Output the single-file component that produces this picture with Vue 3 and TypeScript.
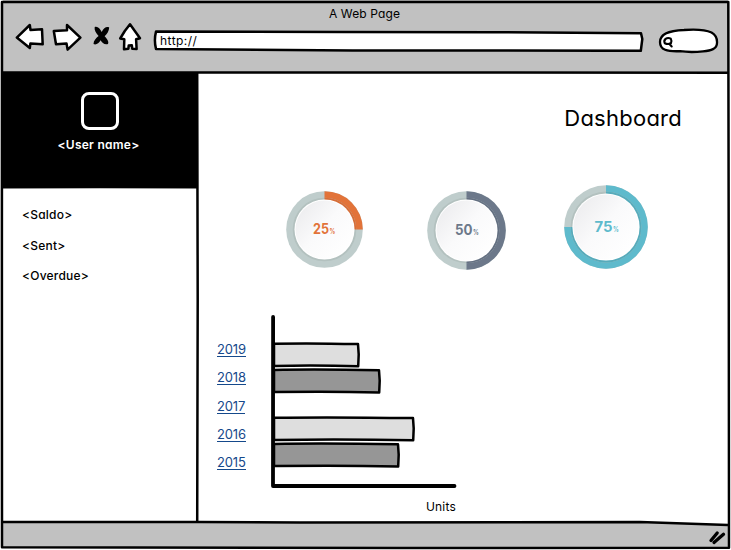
<script setup lang="ts">
interface Gauge {
  value: number
  color: string
  shade: string
  size: number
  hole: number
  textWidth: number
}

interface Bar {
  width: number
  fill: string
  y: number
}

const menu: string[] = ['<Saldo>', '<Sent>', '<Overdue>']
const years: number[] = [2019, 2018, 2017, 2016, 2015]

const gauges: Gauge[] = [
  { value: 25, color: '#e27339', shade: '#d66d37', size: 77, hole: 30, textWidth: 16 },
  { value: 50, color: '#6c788a', shade: '#647082', size: 79, hole: 31, textWidth: 17.5 },
  { value: 75, color: '#5ebacc', shade: '#56abbb', size: 84, hole: 33.6, textWidth: 18 },
]

const bars: Bar[] = [
  { width: 85, fill: '#dedede', y: 28.4 },
  { width: 106, fill: '#969696', y: 54.6 },
  { width: 140, fill: '#dedede', y: 102.4 },
  { width: 125, fill: '#969696', y: 128.6 },
]

function arc(value: number, r: number): string {
  const a = (value / 100) * Math.PI * 2
  const x = Math.sin(a) * r
  const y = -Math.cos(a) * r
  return `M0 0V${-r}A${r} ${r} 0 ${value > 50 ? 1 : 0} 1 ${x} ${y}Z`
}

function barPath(b: Bar): string {
  const r = 3 + b.width
  return `M3 ${b.y + 0.4}Q${3 + b.width * 0.4} ${b.y - 0.5} ${r - 1} ${b.y + 0.7}L${r - 0.3} ${b.y + 11}L${r - 0.8} ${b.y + 22.8}Q${3 + b.width * 0.5} ${b.y + 21.6} 3 ${b.y + 22.5}Z`
}
</script>

<template>
  <div class="window">
    <header class="chrome">
      <div class="caption">A Web Page</div>
      <div class="toolbar">
        <svg class="nav" width="132" height="32" viewBox="12 21 132 32">
          <g fill="#fff" stroke="#000" stroke-width="2.5" stroke-linejoin="round">
            <path d="M16.8 37.6L29.8 25L30.5 30L42 29.2L42.7 44.3L30.4 43.4L29.8 48Z" />
            <path d="M53.8 31L67 30.2L67 25L80.4 37.6L67.6 49.6L66.5 43.4L56 44.3Z" />
            <path d="M130 24.3L124.8 31L120.2 38.5L124.3 39.2L124 49.2L128.4 48.7L128.7 45.5L131.8 45.2L132.3 48.8L136.6 49L136.1 39.3L140 38.2Z" />
          </g>
          <path d="M94.7 27C97.5 25.8 100 28.5 101.7 32C103.8 28 106.4 26.1 109.2 27.5C109 31 107 34.4 104.6 36.3C106.6 38.5 109.3 41.4 108 44C104.7 45.3 102 42.6 100.6 40.2C98.7 43.1 96.3 45.3 93.5 44C93.5 40.6 96.2 38 98.6 36C96 33.2 94 30 94.7 27Z" />
        </svg>
        <div class="address">
          <svg class="outline" width="492" height="22" viewBox="0 0 492 22">
            <path d="M3 1.6L190 2L340 2.2L488 3.2L489.3 9L487.8 20.8L200 20.4L3 19Q.8 10 3 1.6Z" fill="#fff" stroke="#000" stroke-width="2.5" stroke-linejoin="round" />
          </svg>
          <span class="url">http://</span>
        </div>
        <svg class="search" width="62" height="26" viewBox="657 28 62 26">
          <path d="M660 42C660 34 669 30.5 684 30Q703 28.6 711.5 32.5Q717.5 36 717 43C717 49 711 50.5 703 51.3Q691 52.7 680 51.2C667 51.7 660 50 660 42Z" fill="#fff" stroke="#000" stroke-width="2.3" />
          <path d="M665.6 38.9Q668 37.1 670.8 38.7Q672 40.7 670.9 43.3Q668 44.7 664.8 43.2Q663.5 40.8 665.6 38.9ZM669.2 43.8L671.7 46.4" fill="none" stroke="#000" stroke-width="2.1" stroke-linecap="round" />
        </svg>
      </div>
    </header>

    <div class="body">
      <aside class="sidebar">
        <div class="profile">
          <div class="avatar"></div>
          <div class="name">&lt;User name&gt;</div>
        </div>
        <nav class="menu">
          <span v-for="item in menu" :key="item">{{ item }}</span>
        </nav>
      </aside>

      <main class="main">
        <h1 class="title">Dashboard</h1>
        <section class="gauges">
          <svg v-for="g in gauges" :key="g.value" :class="'g' + g.value" :width="g.size" :height="g.size" :viewBox="`${-g.size / 2} ${-g.size / 2} ${g.size} ${g.size}`">
            <defs>
              <linearGradient :id="'face' + g.value" x1="0" y1="0.1" x2="0.9" y2="0.9">
                <stop offset="0" stop-color="#ebebed" />
                <stop offset="0.5" stop-color="#fafafb" />
                <stop offset="1" stop-color="#ffffff" />
              </linearGradient>
            </defs>
            <circle :r="g.size / 2 - 0.2" fill="#bfcdcc" />
            <path :d="arc(g.value, g.size / 2 - 0.2)" :fill="g.color" />
            <circle :r="g.hole + 1.8" fill="#b3c1bf" />
            <path :d="arc(g.value, g.hole + 1.8)" :fill="g.shade" />
            <circle :r="g.hole" fill="#fff" />
            <circle :r="g.hole - 1" :fill="`url(#face${g.value})`" />
            <text x="-11.5" y="4.6" class="value" :fill="g.color" :textLength="g.textWidth" lengthAdjust="spacingAndGlyphs">{{ g.value }}</text>
            <text :x="g.textWidth - 11" y="4.8" class="percent" :fill="g.color" textLength="5.8" lengthAdjust="spacingAndGlyphs">%</text>
          </svg>
        </section>
        <section class="report">
          <div class="years">
            <a v-for="y in years" :key="y">{{ y }}</a>
          </div>
          <div class="plot">
            <svg width="188" height="176" viewBox="0 0 188 176">
              <path v-for="b in bars" :key="b.y" :d="barPath(b)" :fill="b.fill" stroke="#000" stroke-width="2.5" stroke-linejoin="round" />
              <path d="M2.1 2L2 171L183.5 171" fill="none" stroke="#000" stroke-width="3.8" stroke-linecap="round" stroke-linejoin="round" />
            </svg>
            <div class="units">Units</div>
          </div>
        </section>
      </main>
    </div>

    <footer class="status"></footer>

    <svg class="frame" width="731" height="550" viewBox="0 0 731 550">
      <path d="M3 522L300 522.3L640 522L728 525V547H3Z" fill="#c1c1c1" />
      <g fill="none" stroke="#000" stroke-width="2.5" stroke-linejoin="round">
        <path d="M2 2L728.3 2L728.8 300L729 547.8L400 548L2 547.3L1.9 250Z" />
        <path d="M2 72.4L400 72.5L728 72.7" />
        <path d="M2 522L200 522L300 522.4L640 522.1L728 525" />
        <path d="M197.2 73L197.7 300L197.2 522" />
        <path d="M2 187.3L100 187L197 187.3" />
      </g>
      <path d="M711 540.5L717.2 533M714 542.5L723.5 534.3" stroke="#000" stroke-width="3.3" stroke-linecap="round" />
    </svg>
  </div>
</template>

<style>
body {
  background: #fff;
}
</style>

<style scoped>
.window {
  position: relative;
  width: 731px;
  height: 550px;
  display: grid;
  grid-template-rows: 73px 449px 28px;
  overflow: hidden;
  font-family: Inter, "Liberation Sans", sans-serif;
  font-feature-settings: "cv11";
  font-size: 13px;
  color: #000;
  background: #fff;
}
.frame {
  position: absolute;
  inset: 0;
  pointer-events: none;
}
.chrome {
  margin: 0 3px;
  background: #c1c1c1;
}
.caption {
  height: 21px;
  padding: 6px 2px 0 0;
  box-sizing: border-box;
  line-height: 15px;
  text-align: center;
  font-size: 12px;
  letter-spacing: 0.12px;
}
.toolbar {
  display: flex;
  align-items: flex-start;
  padding-left: 9px;
}
.nav {
  flex: none;
}
.address {
  position: relative;
  width: 492px;
  height: 22px;
  margin: 9px 0 0 9px;
}
.outline {
  position: absolute;
  inset: 0;
}
.url {
  position: relative;
  display: block;
  padding-left: 7px;
  font-size: 12px;
  line-height: 21px;
  letter-spacing: 0.45px;
}
.search {
  margin: 7px 0 0 12px;
}
.body {
  display: grid;
  grid-template-columns: 198px 1fr;
}
.sidebar {
  padding-left: 2px;
}
.profile {
  height: 114px;
  box-sizing: border-box;
  padding-top: 19px;
  display: flex;
  flex-direction: column;
  align-items: center;
  background: #000;
  color: #fff;
}
.avatar {
  box-sizing: border-box;
  width: 38px;
  height: 38px;
  margin-right: 1px;
  border: 3px solid #fff;
  border-radius: 8px;
}
.name {
  margin: 7px 3px 0 0;
  line-height: 16px;
  font-size: 12px;
  font-weight: 600;
  letter-spacing: 0.25px;
}
.menu {
  display: flex;
  flex-direction: column;
  gap: 14.5px;
  padding: 20px 0 0 20px;
  font-size: 12px;
  font-weight: 500;
  letter-spacing: 0.22px;
  line-height: 16px;
}
.title {
  margin: 0;
  padding: 31px 49px 0 0;
  text-align: right;
  font-size: 22px;
  font-weight: 400;
  line-height: 28px;
  letter-spacing: 0.25px;
}
.gauges {
  display: flex;
  align-items: flex-start;
  height: 86px;
  padding: 53px 0 0 88px;
}
.g25 {
  margin-top: 6px;
}
.g50 {
  margin: 6px 57.5px 0 64px;
}
.value {
  font-size: 14.5px;
  font-weight: 700;
}
.percent {
  font-size: 7.5px;
  font-weight: 700;
}
.report {
  display: flex;
  align-items: flex-start;
  padding: 44px 0 0 19px;
}
.years {
  display: flex;
  flex-direction: column;
  align-items: flex-start;
  gap: 13.3px;
  width: 54px;
  padding-top: 27px;
  color: #15498b;
  font-size: 13px;
}
.years a {
  line-height: 14px;
  letter-spacing: -0.15px;
  border-bottom: 1px solid #15498b;
}
.plot svg {
  display: block;
}
.units {
  padding: 8px 3px 0 0;
  text-align: right;
  font-size: 12px;
  line-height: 16px;
  letter-spacing: 0.2px;
}
</style>
